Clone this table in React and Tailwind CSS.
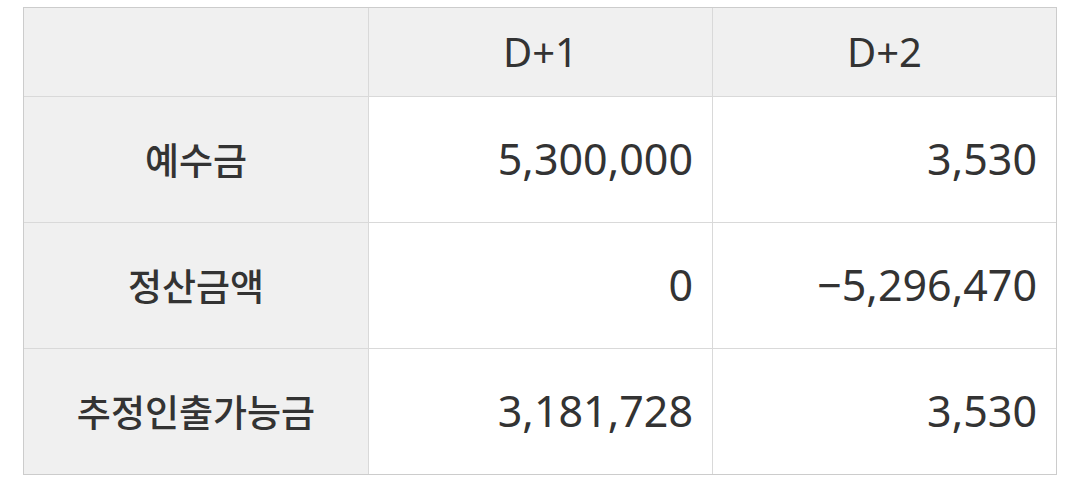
export default function App() {
  const num = { fontFamily: '"Noto Sans", "Noto Sans CJK KR", sans-serif' };
  const kr = { fontFamily: '"Noto Sans CJK KR", "Noto Sans", sans-serif' };
  const rows = [
    ["예수금", "5,300,000", "3,530"],
    ["정산금액", "0", "−5,296,470"],
    ["추정인출가능금", "3,181,728", "3,530"],
  ];
  return (
    <div className="w-[1080px] h-[480px] bg-white pt-[7px] pl-[23px]" style={num}>
      <div className="w-fit border border-[#cccccc] grid grid-cols-[345px_344px_343px] grid-rows-[89px_126px_126px_125px] text-[#333333]">
        <div className="bg-[#f0f0f0] border-r border-b border-[#d9d9d9]" />
        <div className="bg-[#f0f0f0] border-r border-b border-[#d9d9d9] flex items-center justify-center text-[40px]">D+1</div>
        <div className="bg-[#f0f0f0] border-b border-[#d9d9d9] flex items-center justify-center text-[40px]">D+2</div>
        {rows.map((r, i) => (
          <>
            <div key={"a" + i} style={kr} className={"bg-[#f0f0f0] border-r border-[#d9d9d9] flex items-center justify-center text-[37px] font-medium " + (i < 2 ? "border-b" : "")}>{r[0]}</div>
            <div key={"b" + i} className={"bg-white border-r border-[#d9d9d9] flex items-center justify-end pr-[19px] text-[43px] " + (i < 2 ? "border-b" : "")}>{r[1]}</div>
            <div key={"c" + i} className={"bg-white border-[#d9d9d9] flex items-center justify-end pr-[19px] text-[43px] " + (i < 2 ? "border-b" : "")}>{r[2]}</div>
          </>
        ))}
      </div>
    </div>
  );
}
